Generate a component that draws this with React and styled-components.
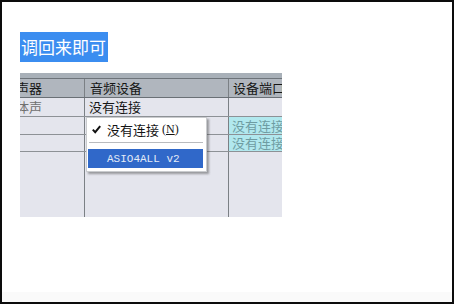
import React from "react";
import styled, { createGlobalStyle } from "styled-components";

const Global = createGlobalStyle`
  html, body { margin: 0; padding: 0; background: #fff; }
  * { box-sizing: border-box; }
`;

const CJK = `"Noto Sans CJK SC", "Noto Sans", sans-serif`;

const Frame = styled.div`
  width: 454px;
  height: 304px;
  border: 2px solid #0c0c0c;
  background: #fff;
  display: flex;
  flex-direction: column;
  align-items: flex-start;
  padding: 30px 0 0 18px;
`;

const Label = styled.div`
  height: 30px;
  line-height: 30px;
  padding: 0 2px 0 1px;
  background: #3b8df0;
  color: #fff;
  font-family: ${CJK};
  font-size: 17px;
  white-space: nowrap;
`;

const Shot = styled.div`
  position: relative;
  margin-top: 11px;
  width: 262px;
  height: 144px;
  overflow: hidden;
  background: #e4e5ed;
  display: flex;
  flex-direction: column;
`;

const TopStrip = styled.div`
  height: 6px;
  background: #a8b0b8;
  border-bottom: 1px solid #6d7379;
`;

const Table = styled.div`
  margin-left: -20px;
  flex: 1;
  display: flex;
  flex-direction: column;
`;

const Row = styled.div`
  display: flex;
  height: ${(p) => p.$h}px;
  flex: ${(p) => (p.$fill ? 1 : "none")};
  background: ${(p) => (p.$head ? "#b0b6be" : "transparent")};
  border-bottom: ${(p) => (p.$fill ? "none" : p.$head ? "1px solid #6a7076" : "1px solid #8d9196")};
`;

const Cell = styled.div`
  width: ${(p) => p.$w}px;
  flex: none;
  height: 100%;
  border-right: ${(p) => (p.$last ? "none" : "1px solid #7b8085")};
  padding-left: ${(p) => p.$pl ?? 4}px;
  font-family: ${CJK};
  font-size: 13px;
  line-height: ${(p) => p.$lh ?? 17}px;
  white-space: nowrap;
  overflow: hidden;
  color: ${(p) => p.$color || "#161616"};
  background: ${(p) => p.$bg || "transparent"};
`;

const Menu = styled.div`
  position: absolute;
  left: 66px;
  top: 44px;
  width: 121px;
  height: 55px;
  background: #fff;
  border: 1px solid #c9cbce;
  padding: 1px 3px 0 1px;
  box-shadow: 2px 2px 2px rgba(60, 60, 60, 0.45);
  display: flex;
  flex-direction: column;
`;

const Item = styled.div`
  height: ${(p) => p.$h}px;
  display: flex;
  align-items: center;
  padding-left: ${(p) => p.$pl}px;
  background: ${(p) => (p.$active ? "#3068c9" : "transparent")};
  color: ${(p) => (p.$active ? "#e4ebf7" : "#141414")};
  white-space: nowrap;
`;

const Check = styled.svg`
  width: 9px;
  height: 9px;
  margin-right: 6px;
  flex: none;
`;

const ItemText = styled.span`
  font-family: ${CJK};
  font-size: 13px;
`;

const Accel = styled.span`
  font-family: "Liberation Serif", serif;
  font-size: 12px;
  margin-left: 3px;
  & u { text-decoration-thickness: 1px; text-underline-offset: 1px; }
`;

const Mono = styled.span`
  font-family: "Liberation Mono", monospace;
  font-size: 11px;
`;

const Separator = styled.div`
  margin: 2px 0 5px 1px;
  height: 2px;
  border-top: 1px solid #b9bbbe;
  border-bottom: 1px solid #fff;
`;

const Footer = styled.div`
  margin-top: auto;
  margin-left: -18px;
  width: 450px;
  height: 10px;
  background: #fafafa;
`;

export default function App() {
  return (
    <>
      <Global />
      <Frame>
        <Label>调回来即可</Label>
        <Shot>
          <TopStrip />
          <Table>
            <Row $head $h={19}>
              <Cell $w={85} $pl={3} $lh={18}>扬声器</Cell>
              <Cell $w={144} $pl={5} $lh={18}>音频设备</Cell>
              <Cell $w={60} $pl={4} $lh={18} $last>设备端口</Cell>
            </Row>
            <Row $h={19}>
              <Cell $w={85} $pl={3} $lh={18} $color="#707070">立体声</Cell>
              <Cell $w={144} $pl={4} $lh={18}>没有连接</Cell>
              <Cell $w={60} $last />
            </Row>
            <Row $h={18}>
              <Cell $w={85} />
              <Cell $w={144} />
              <Cell $w={60} $pl={3} $last $bg="#b1e8ee" $color="#6e9ca2">没有连接</Cell>
            </Row>
            <Row $h={17}>
              <Cell $w={85} />
              <Cell $w={144} />
              <Cell $w={60} $pl={3} $lh={16} $last $bg="#b1e8ee" $color="#6e9ca2">没有连接</Cell>
            </Row>
            <Row $fill>
              <Cell $w={85} />
              <Cell $w={144} />
              <Cell $w={60} $last />
            </Row>
          </Table>
          <Menu>
            <Item $h={21} $pl={4}>
              <Check viewBox="0 0 9 9">
                <path d="M0.8 4.6 L3.2 7.2 L8.2 1.2" fill="none" stroke="#111" strokeWidth="2" />
              </Check>
              <ItemText>没有连接</ItemText>
              <Accel>(<u>N</u>)</Accel>
            </Item>
            <Separator />
            <Item $h={19} $pl={19} $active>
              <Mono>ASIO4ALL v2</Mono>
            </Item>
          </Menu>
        </Shot>
        <Footer />
      </Frame>
    </>
  );
}
